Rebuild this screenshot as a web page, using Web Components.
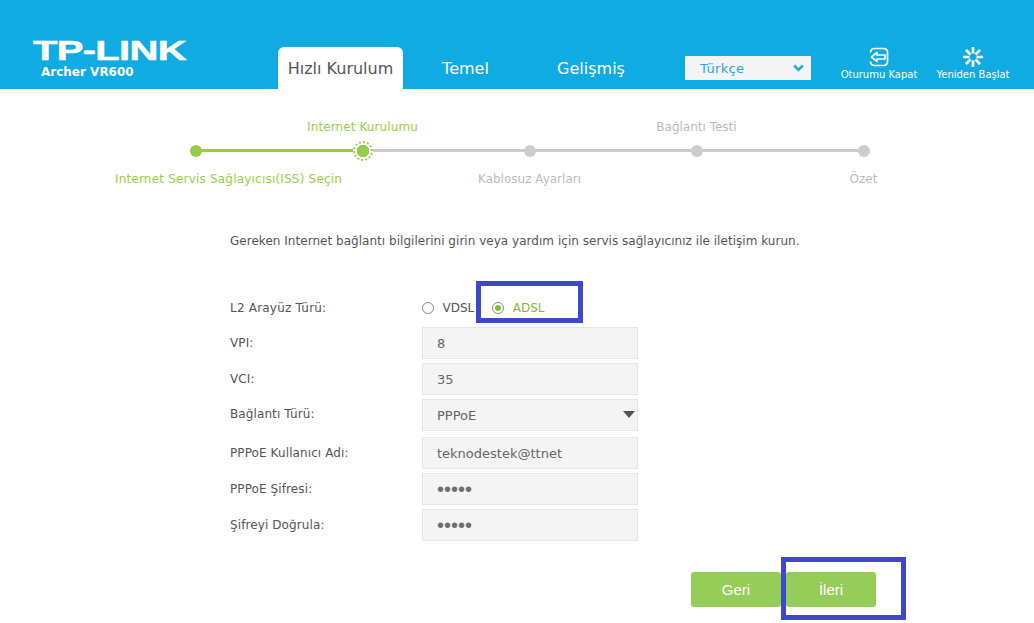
<!DOCTYPE html>
<html lang="tr">
<head>
<meta charset="utf-8">
<title>Archer VR600</title>
<style>
    html, body { margin: 0; padding: 0; height: 100%; overflow: hidden; background: #fff; }
    body { font-family: "DejaVu Sans", Verdana, sans-serif; font-size: 12px; color: #555; }
</style>
</head>
<body>
<router-header></router-header>
<setup-stepper></setup-stepper>
<setup-form></setup-form>
<script>
class RouterHeader extends HTMLElement {
    constructor() {
        super();
        this.attachShadow({ mode: "open" });
    }

    connectedCallback() {
        this.shadowRoot.innerHTML = `
            <style>
                :host { display: flex; height: 89px; background: #11abe3; color: #fff; align-items: flex-end; }
                .brand { width: 278px; padding-left: 33px; box-sizing: border-box; align-self: flex-start; padding-top: 36px; }
                .logo { font: bold 28px/30px "Liberation Sans", sans-serif; display: block; width: 153px; height: 30px; transform: scaleX(1.43); transform-origin: 0 0; white-space: nowrap; letter-spacing: -0.5px; -webkit-text-stroke: 0.5px #fff; }
                .model { font: bold 12px/14px "DejaVu Sans", sans-serif; display: block; margin: -1px 0 0 8px; }
                nav { display: flex; width: 407px; }
                .tab { height: 42px; line-height: 44px; font-size: 16px; text-align: center; }
                .tab.on { width: 125px; background: #fff; color: #555; border-radius: 6px 6px 0 0; }
                .tab.a { width: 125px; }
                .tab.b { width: 106px; margin-left: 10px; }
                .lang { width: 126px; height: 24px; margin-bottom: 9px; background: #f4f4f4; color: #2aa7e0; font-size: 13px; line-height: 26px; padding-left: 15px; box-sizing: border-box; position: relative; letter-spacing: 0.3px; }
                .lang svg { position: absolute; right: 7px; top: 8px; }
                .act { width: 94px; margin-bottom: 8px; text-align: center; font-size: 10px; line-height: 12px; white-space: nowrap; }
                .act svg { display: block; margin: 0 auto 2px; }
                .act.first { margin-left: 21px; }
            </style>
            <div class="brand">
                <span class="logo">TP-LINK</span>
                <span class="model">Archer VR600</span>
            </div>
            <nav>
                <div class="tab on">Hızlı Kurulum</div>
                <div class="tab a">Temel</div>
                <div class="tab b">Gelişmiş</div>
            </nav>
            <div class="lang">Türkçe
                <svg width="11" height="8" viewBox="0 0 11 8"><path d="M1.200 1.500 5.500 5.800 9.800 1.500" fill="none" stroke="#2aa7e0" stroke-width="2.600"/></svg>
            </div>
            <div class="act first">
                <svg width="20" height="20" viewBox="0 0 20 20" fill="none" stroke="#fff" stroke-width="1.700"><path d="M1.500 5.500V5A3.500 3.500 0 0 1 5 1.500h10A3.500 3.500 0 0 1 18.500 5v10a3.500 3.500 0 0 1-3.500 3.500H5A3.500 3.500 0 0 1 1.500 15v-.5"/><path d="M2.500 10l5.500-4.500v2.500h8v4H8v2.500z" stroke-linejoin="round"/></svg>
                Oturumu Kapat
            </div>
            <div class="act">
                <svg width="20" height="20" viewBox="0 0 20 20" stroke="#fff" stroke-width="2.700"><path d="M10 0v6.500M10 13.500V20M0 10h6.500M13.500 10H20M2.900 2.900l4.600 4.600M12.500 12.500l4.600 4.600M17.100 2.900l-4.600 4.600M7.500 12.500l-4.600 4.600"/></svg>
                Yeniden Başlat
            </div>
        `;
    }
}

class SetupStepper extends HTMLElement {
    constructor() {
        super();
        this.attachShadow({ mode: "open" });
    }

    connectedCallback() {
        const steps = [
            { below: "Internet Servis Sağlayıcısı(ISS) Seçin", cls: "done first" },
            { above: "Internet Kurulumu", cls: "done current" },
            { below: "Kablosuz Ayarları" },
            { above: "Bağlantı Testi" },
            { below: "Özet" }
        ];
        const cells = steps.map(s => `
            <div class="step ${s.cls || ""}">
                <span class="label up">${s.above || ""}</span>
                <span class="dot"></span>
                <span class="label down">${s.below || ""}</span>
            </div>`).join("");
        this.shadowRoot.innerHTML = `
            <style>
                :host { display: block; padding: 29px 0 0 112px; height: 117px; box-sizing: border-box; font-size: 12px; color: #bbb; }
                .track { display: grid; grid-template-columns: repeat(5, 167px); position: relative; }
                .step { display: flex; flex-direction: column; align-items: center; position: relative; }
                .label { height: 18px; line-height: 18px; white-space: nowrap; }
                .up { margin-bottom: 9px; }
                .down { margin-top: 13px; }
                .done .label { color: #9ad048; }
                .first .down { transform: translateX(33px); letter-spacing: 0.2px; }
                .current .up { letter-spacing: 0.1px; }
                .dot { width: 12px; height: 12px; border-radius: 50%; background: #ccc; position: relative; z-index: 1; }
                .done .dot { background: #96cc4a; }
                .current .dot::after { content: ""; position: absolute; inset: -4px; border: 2px dotted #96cc4a; border-radius: 50%; background: radial-gradient(circle at center, #96cc4a 6px, #fff 6.500px); }
                .line { position: absolute; top: 31px; left: 84px; width: 668px; height: 3px; background: linear-gradient(90deg, #96cc4a 167px, #ccc 167px); }
            </style>
            <div class="track"><div class="line"></div>${cells}</div>
        `;
    }
}

class FormRow extends HTMLElement {
    constructor() {
        super();
        this.attachShadow({ mode: "open" });
    }

    connectedCallback() {
        const gap = this.getAttribute("gap") || "4";
        const isSelect = this.hasAttribute("select");
        this.shadowRoot.innerHTML = `
            <style>
                :host { display: flex; align-items: flex-start; margin-top: ${gap}px; }
                .name { width: 192px; line-height: ${isSelect ? 30 : 32}px; white-space: nowrap; letter-spacing: 0.1px; }
                .box { width: 216px; height: 32px; box-sizing: border-box; background: #f4f4f4; border: 1px solid #e6e6e6; padding-left: 14px; line-height: 32px; font-size: 13px; position: relative; color: #666; }
                .arrow { position: absolute; right: 2px; top: 11px; width: 0; height: 0; border: 6px solid transparent; border-top: 7px solid #555; border-bottom: 0; }
            </style>
            <span class="name">${this.getAttribute("label")}</span>
            <div class="box"><slot></slot>${isSelect ? '<span class="arrow"></span>' : ""}</div>
        `;
    }
}

class RadioOption extends HTMLElement {
    constructor() {
        super();
        this.attachShadow({ mode: "open" });
    }

    connectedCallback() {
        const on = this.hasAttribute("checked");
        this.shadowRoot.innerHTML = `
            <style>
                :host { display: inline-flex; align-items: center; gap: 8.500px; color: ${on ? "#86b83c" : "#555"}; }
                .ring { width: 12px; height: 12px; box-sizing: border-box; border: 1px solid #888; border-radius: 50%; display: flex; align-items: center; justify-content: center; background: #fff; }
                .ring i { width: 6px; height: 6px; border-radius: 50%; background: #86b83c; }
            </style>
            <span class="ring">${on ? "<i></i>" : ""}</span><slot></slot>
        `;
    }
}

class GreenButton extends HTMLElement {
    constructor() {
        super();
        this.attachShadow({ mode: "open" });
    }

    connectedCallback() {
        this.shadowRoot.innerHTML = `
            <style>
                :host { display: block; width: 90px; height: 35px; background: #96cc58; color: #fff; border-radius: 3px; text-align: center; font: 15px/36px "Liberation Sans", sans-serif; }
            </style>
            <slot></slot>
        `;
    }
}

// blue marker drawn on top of the screenshot
class MarkBox extends HTMLElement {
    constructor() {
        super();
        this.attachShadow({ mode: "open" });
    }

    connectedCallback() {
        this.shadowRoot.innerHTML = `
            <style>
                :host { display: block; position: absolute; box-sizing: border-box; border: 5px solid #3f48cc; pointer-events: none; }
            </style>
        `;
    }
}

class SetupForm extends HTMLElement {
    constructor() {
        super();
        this.attachShadow({ mode: "open" });
    }

    connectedCallback() {
        this.shadowRoot.innerHTML = `
            <style>
                :host { display: block; height: 417px; box-sizing: border-box; padding: 28px 0 0 230px; position: relative; font-size: 12px; color: #555; }
                p { margin: 0; line-height: 14px; white-space: nowrap; letter-spacing: 0.03px; }
                .radios { display: flex; align-items: center; margin-top: 48px; height: 24px; }
                .radios .name { width: 192px; letter-spacing: 0.2px; }
                .radios radio-option + radio-option { margin-left: 18px; }
                .stack { margin-top: 7px; }
                .dots { font: 20px/30px "Liberation Sans", sans-serif; color: #6e6e6e; }
                .actions { display: flex; gap: 5px; margin: 31px 0 0 461px; }
                .adsl { left: 476px; top: 75px; width: 107px; height: 42px; }
                .next { left: 781px; top: 351px; width: 125px; height: 63px; }
            </style>
            <p>Gereken Internet bağlantı bilgilerini girin veya yardım için servis sağlayıcınız ile iletişim kurun.</p>
            <div class="radios">
                <span class="name">L2 Arayüz Türü:</span>
                <radio-option>VDSL</radio-option>
                <radio-option checked>ADSL</radio-option>
            </div>
            <div class="stack">
                <form-row label="VPI:" gap="0">8</form-row>
                <form-row label="VCI:">35</form-row>
                <form-row label="Bağlantı Türü:" select>PPPoE</form-row>
                <form-row label="PPPoE Kullanıcı Adı:" gap="6">teknodestek@ttnet</form-row>
                <form-row label="PPPoE Şifresi:"><span class="dots">•••••</span></form-row>
                <form-row label="Şifreyi Doğrula:"><span class="dots">•••••</span></form-row>
            </div>
            <div class="actions">
                <green-button>Geri</green-button>
                <green-button>İleri</green-button>
            </div>
            <mark-box class="adsl"></mark-box>
            <mark-box class="next"></mark-box>
        `;
    }
}

customElements.define("router-header", RouterHeader);
customElements.define("setup-stepper", SetupStepper);
customElements.define("form-row", FormRow);
customElements.define("radio-option", RadioOption);
customElements.define("green-button", GreenButton);
customElements.define("mark-box", MarkBox);
customElements.define("setup-form", SetupForm);
</script>
</body>
</html>
